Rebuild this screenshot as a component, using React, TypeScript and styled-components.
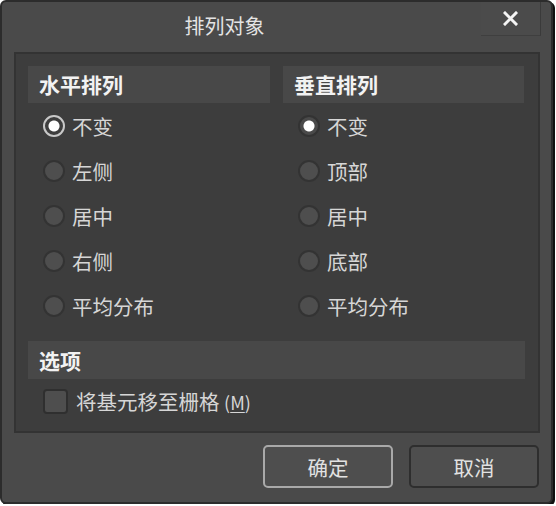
import styled, { createGlobalStyle } from 'styled-components';

const GlobalStyle = createGlobalStyle`
  html, body {
    margin: 0;
    padding: 0;
    background: #ffffff;
  }
  body {
    font-family: "Noto Sans CJK SC", "Noto Sans", sans-serif;
  }
`;

export default function App () {

  const horizontal = ['不变', '左侧', '居中', '右侧', '平均分布'];
  const vertical = ['不变', '顶部', '居中', '底部', '平均分布'];

  return (
    <>
      <GlobalStyle />
      <Window>
        <TitleBar>
          <Title>排列对象</Title>
          <CloseButton>
            <svg width="15" height="15" viewBox="0 0 15 15">
              <path d="M2 2 L13 13 M13 2 L2 13" stroke="#f4f4f4" strokeWidth="3" strokeLinecap="square" />
            </svg>
          </CloseButton>
        </TitleBar>
        <Panel>
          <Columns>
            <Group>
              <SectionHeader>水平排列</SectionHeader>
              {horizontal.map((label, i) => (
                <RadioRow key={label}>
                  <Radio $checked={i === 0} />
                  <Label>{label}</Label>
                </RadioRow>
              ))}
            </Group>
            <Group>
              <SectionHeader>垂直排列</SectionHeader>
              {vertical.map((label, i) => (
                <RadioRow key={label}>
                  <Radio $checked={i === 0} $plain />
                  <Label>{label}</Label>
                </RadioRow>
              ))}
            </Group>
          </Columns>
          <OptionsHeader>选项</OptionsHeader>
          <CheckRow>
            <Checkbox />
            <Label>将基元移至栅格 <Hotkey>(<u>M</u>)</Hotkey></Label>
          </CheckRow>
        </Panel>
        <Footer>
          <Button $primary>确定</Button>
          <Button>取消</Button>
        </Footer>
      </Window>
    </>
  )
}

const Window = styled.div`
  box-sizing: border-box;
  width: 553px;
  height: 504px;
  background: #4a4a4a;
  border: 2px solid #2c2c2c;
  border-radius: 6px;
  box-shadow: 2px 2px 0 #111;
  display: flex;
  flex-direction: column;
`;
const TitleBar = styled.div`
  display: flex;
  align-items: flex-start;
  height: 50px;
`;
const Title = styled.div`
  flex: 1;
  text-align: center;
  font-size: 20px;
  line-height: 22px;
  color: #e4e4e4;
  padding: 13px 34px 0 0;
`;
const CloseButton = styled.div`
  box-sizing: border-box;
  width: 60px;
  height: 34px;
  margin-right: 10px;
  display: flex;
  align-items: center;
  justify-content: center;
  border-right: 1px solid #3a3a3a;
  border-bottom: 1px solid #3f3f3f;
  background: #4b4b4b;
`;
const Panel = styled.div`
  box-sizing: border-box;
  margin: 0 11px 0 12px;
  height: 381px;
  background: #3d3d3d;
  border: 2px solid #333333;
  padding: 12px 13px 0 12px;
`;
const Columns = styled.div`
  display: grid;
  grid-template-columns: 242px 241px;
  column-gap: 13px;
`;
const Group = styled.div`
  display: flex;
  flex-direction: column;
`;
const SectionHeader = styled.div`
  height: 37px;
  background: #484848;
  color: #f2f2f2;
  font-size: 21px;
  font-weight: 700;
  line-height: 37px;
  padding-left: 11px;
`;
const OptionsHeader = styled(SectionHeader)`
  height: 38px;
  line-height: 38px;
  margin-top: 13px;
`;
const RadioRow = styled.div`
  display: flex;
  align-items: center;
  height: 45px;
  padding-left: 15px;
  gap: 7px;
`;
const Radio = styled.span<{ $checked?: boolean; $plain?: boolean }>`
  box-sizing: border-box;
  width: 22px;
  height: 22px;
  border-radius: 50%;
  flex: none;
  background: ${p => p.$checked
    ? (p.$plain ? 'radial-gradient(circle, #ffffff 0 5px, #4a4a4a 6px)' : 'radial-gradient(circle, #ffffff 0 5px, #3d3d3d 6px)')
    : '#4e4e4e'};
  border: ${p => p.$checked && !p.$plain ? '2px solid #c8c8c8' : '2px solid #333333'};
`;
const Label = styled.span`
  font-size: 20.5px;
  color: #d6d6d6;
  line-height: 24px;
`;
const Hotkey = styled.span`
  font-size: 18px;
  u {
    text-decoration-thickness: 1px;
    text-underline-offset: 2px;
  }
`;
const CheckRow = styled.div`
  display: flex;
  align-items: center;
  gap: 8px;
  height: 44px;
  padding-left: 15px;
`;
const Checkbox = styled.span`
  box-sizing: border-box;
  width: 25px;
  height: 25px;
  border-radius: 4px;
  background: #4e4e4e;
  border: 2px solid #2f2f2f;
  flex: none;
`;
const Footer = styled.div`
  display: flex;
  justify-content: flex-end;
  gap: 16px;
  padding: 12px 12px 0 0;
`;
const Button = styled.div<{ $primary?: boolean }>`
  box-sizing: border-box;
  width: 130px;
  height: 43px;
  border-radius: 5px;
  display: flex;
  align-items: center;
  justify-content: center;
  font-size: 20.5px;
  color: #e2e2e2;
  background: #4e4e4e;
  border: 2px solid ${p => p.$primary ? '#a9a9a9' : '#2e2e2e'};
`;
